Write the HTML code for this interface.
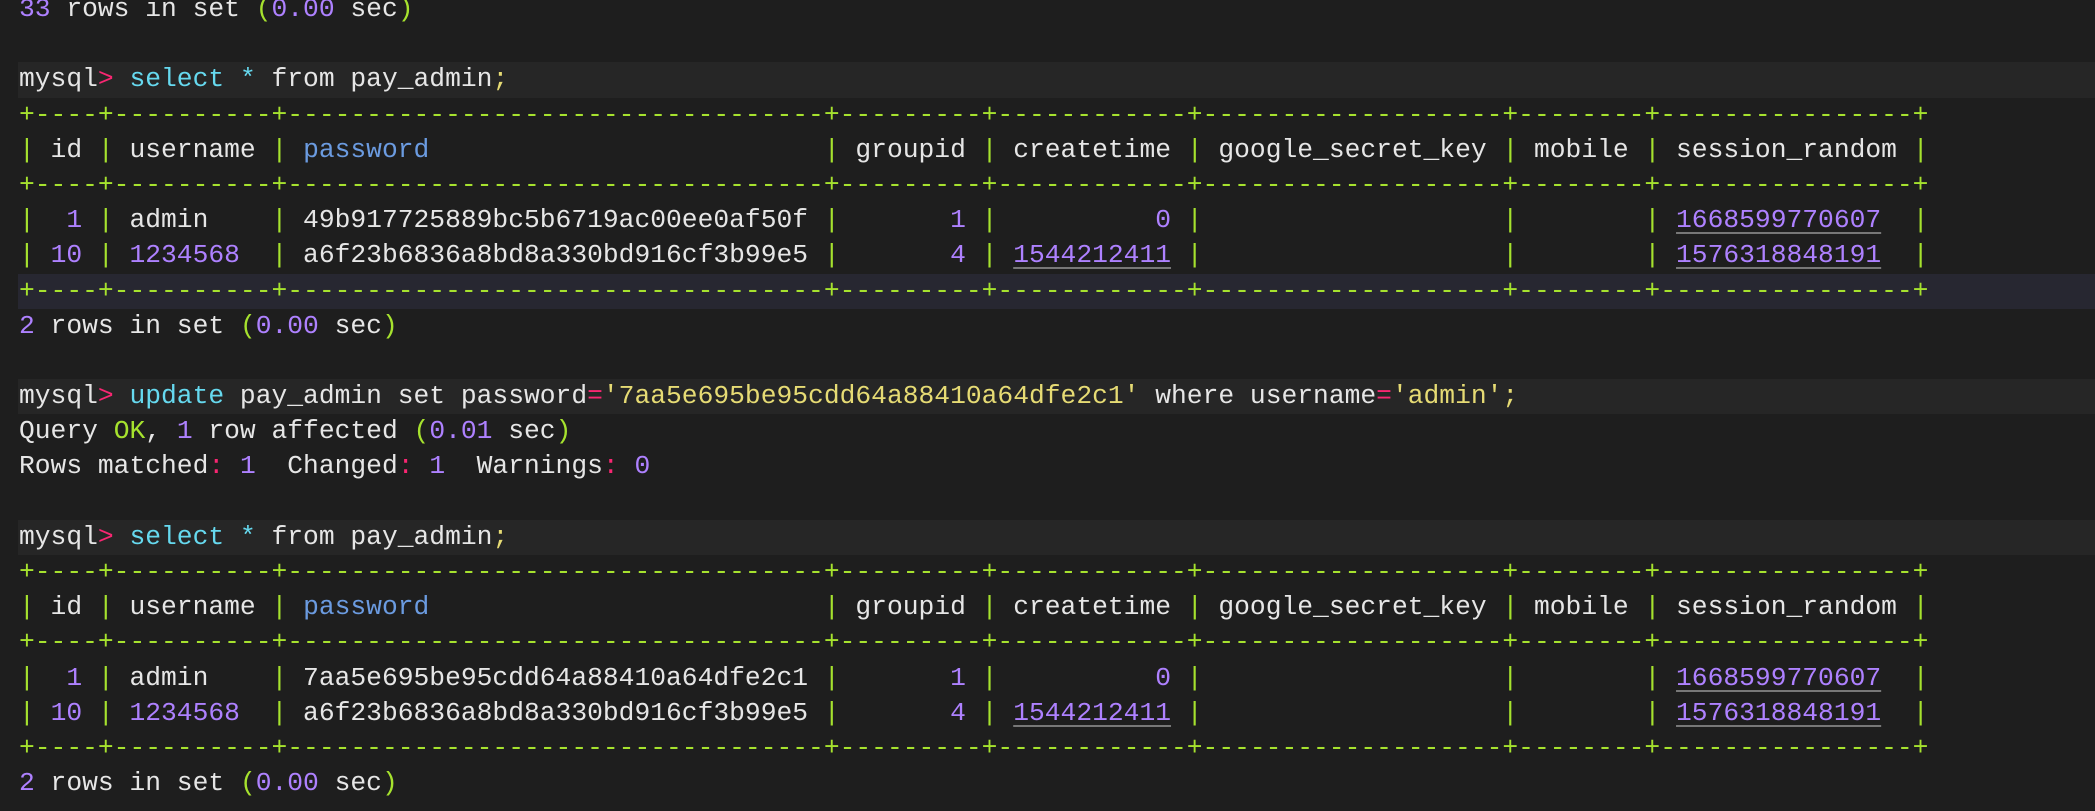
<!DOCTYPE html>
<html><head><meta charset="utf-8"><style>
html,body{margin:0;padding:0;background:#1e1e1e;width:2095px;height:811px;overflow:hidden}
.wrap{position:absolute;left:0;top:-8px;width:2095px}
.l{position:relative;height:35.2px;line-height:35.2px;white-space:pre;font-family:"Liberation Mono",monospace;font-size:26.3px;color:#e6e6e6;padding-left:19px}
.hl{background:#262626;margin-left:18px;padding-left:1px}
.hb{background:#272731;margin-left:18px;padding-left:1px}
.g{color:#a6e22e}.p{color:#ae81ff}.c{color:#66d9ef}.r{color:#f92672}.y{color:#e6db74}.b{color:#6b9be0}
.u{color:#ae81ff;text-decoration:underline;text-decoration-color:#777;text-underline-offset:5px}
</style></head><body><div class="wrap">
<div class="l"><span class="p">33</span> rows in set <span class="g">(</span><span class="p">0.00</span> sec<span class="g">)</span></div>
<div class="l"> </div>
<div class="l hl">mysql<span class="r">&gt;</span> <span class="c">select</span> <span class="c">*</span> from pay_admin<span class="y">;</span></div>
<div class="l g">+----+----------+----------------------------------+---------+------------+-------------------+--------+----------------+</div>
<div class="l"><span class="g">|</span> id <span class="g">|</span> username <span class="g">|</span> <span class="b">password</span>                         <span class="g">|</span> groupid <span class="g">|</span> createtime <span class="g">|</span> google_secret_key <span class="g">|</span> mobile <span class="g">|</span> session_random <span class="g">|</span></div>
<div class="l g">+----+----------+----------------------------------+---------+------------+-------------------+--------+----------------+</div>
<div class="l"><span class="g">|</span>  <span class="p">1</span> <span class="g">|</span> admin    <span class="g">|</span> 49b917725889bc5b6719ac00ee0af50f <span class="g">|</span>       <span class="p">1</span> <span class="g">|</span>          <span class="p">0</span> <span class="g">|</span>                   <span class="g">|</span>        <span class="g">|</span> <span class="u">1668599770607</span>  <span class="g">|</span></div>
<div class="l"><span class="g">|</span> <span class="p">10</span> <span class="g">|</span> <span class="p">1234568</span>  <span class="g">|</span> a6f23b6836a8bd8a330bd916cf3b99e5 <span class="g">|</span>       <span class="p">4</span> <span class="g">|</span> <span class="u">1544212411</span> <span class="g">|</span>                   <span class="g">|</span>        <span class="g">|</span> <span class="u">1576318848191</span>  <span class="g">|</span></div>
<div class="l g hb">+----+----------+----------------------------------+---------+------------+-------------------+--------+----------------+</div>
<div class="l"><span class="p">2</span> rows in set <span class="g">(</span><span class="p">0.00</span> sec<span class="g">)</span></div>
<div class="l"> </div>
<div class="l hl">mysql<span class="r">&gt;</span> <span class="c">update</span> pay_admin set password<span class="r">=</span><span class="y">'7aa5e695be95cdd64a88410a64dfe2c1'</span> where username<span class="r">=</span><span class="y">'admin'</span><span class="y">;</span></div>
<div class="l">Query <span class="g">OK</span>, <span class="p">1</span> row affected <span class="g">(</span><span class="p">0.01</span> sec<span class="g">)</span></div>
<div class="l">Rows matched<span class="r">:</span> <span class="p">1</span>  Changed<span class="r">:</span> <span class="p">1</span>  Warnings<span class="r">:</span> <span class="p">0</span></div>
<div class="l"> </div>
<div class="l hl">mysql<span class="r">&gt;</span> <span class="c">select</span> <span class="c">*</span> from pay_admin<span class="y">;</span></div>
<div class="l g">+----+----------+----------------------------------+---------+------------+-------------------+--------+----------------+</div>
<div class="l"><span class="g">|</span> id <span class="g">|</span> username <span class="g">|</span> <span class="b">password</span>                         <span class="g">|</span> groupid <span class="g">|</span> createtime <span class="g">|</span> google_secret_key <span class="g">|</span> mobile <span class="g">|</span> session_random <span class="g">|</span></div>
<div class="l g">+----+----------+----------------------------------+---------+------------+-------------------+--------+----------------+</div>
<div class="l"><span class="g">|</span>  <span class="p">1</span> <span class="g">|</span> admin    <span class="g">|</span> 7aa5e695be95cdd64a88410a64dfe2c1 <span class="g">|</span>       <span class="p">1</span> <span class="g">|</span>          <span class="p">0</span> <span class="g">|</span>                   <span class="g">|</span>        <span class="g">|</span> <span class="u">1668599770607</span>  <span class="g">|</span></div>
<div class="l"><span class="g">|</span> <span class="p">10</span> <span class="g">|</span> <span class="p">1234568</span>  <span class="g">|</span> a6f23b6836a8bd8a330bd916cf3b99e5 <span class="g">|</span>       <span class="p">4</span> <span class="g">|</span> <span class="u">1544212411</span> <span class="g">|</span>                   <span class="g">|</span>        <span class="g">|</span> <span class="u">1576318848191</span>  <span class="g">|</span></div>
<div class="l g">+----+----------+----------------------------------+---------+------------+-------------------+--------+----------------+</div>
<div class="l"><span class="p">2</span> rows in set <span class="g">(</span><span class="p">0.00</span> sec<span class="g">)</span></div>
</div></body></html>
